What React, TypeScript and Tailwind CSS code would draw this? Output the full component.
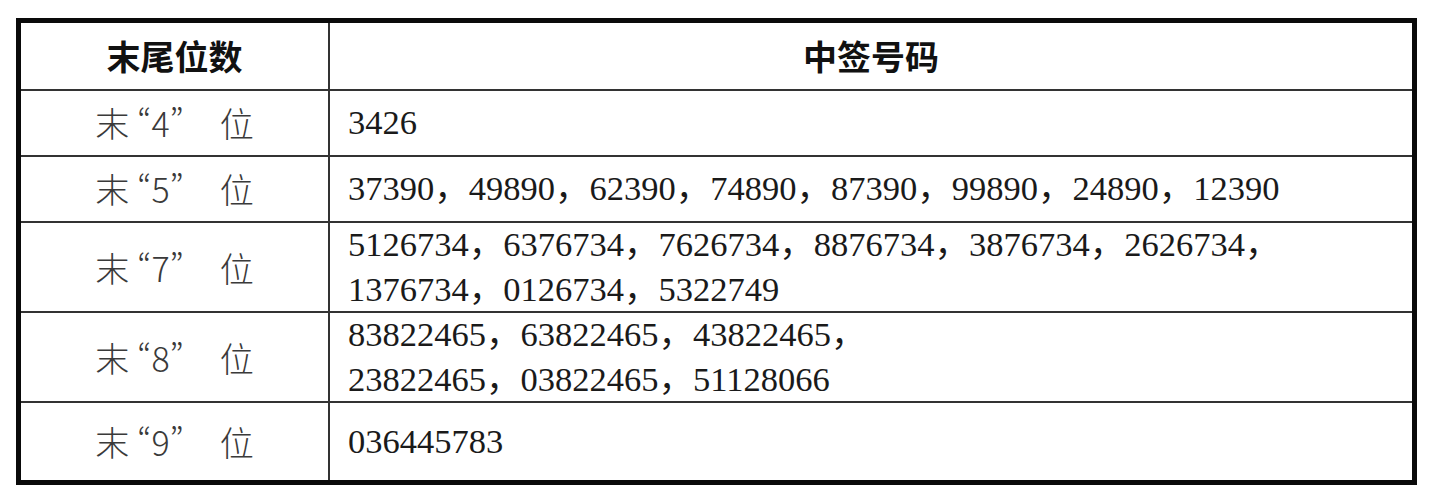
import React from "react";

interface Row {
  label: string;
  lines: string[];
  height: string;
}

const rows: Row[] = [
  { label: "4", lines: ["3426"], height: "h-[66px]" },
  {
    label: "5",
    lines: ["37390，49890，62390，74890，87390，99890，24890，12390"],
    height: "h-[67px]",
  },
  {
    label: "7",
    lines: [
      "5126734，6376734，7626734，8876734，3876734，2626734，",
      "1376734，0126734，5322749",
    ],
    height: "h-[90px]",
  },
  {
    label: "8",
    lines: ["83822465，63822465，43822465，", "23822465，03822465，51128066"],
    height: "h-[90px]",
  },
  { label: "9", lines: ["036445783"], height: "h-[77px]" },
];

const serif = "font-['Liberation_Serif','Noto_Sans_CJK_SC',serif]";
const cjk = "font-['Noto_Sans_CJK_SC',sans-serif]";

const App: React.FC = () => {
  return (
    <div className="w-[1440px] h-[496px] bg-white pt-[18px] pl-[16px]">
      <div className="w-[1401px] h-[467px] border-[5px] border-[#0a0a0a] flex flex-col">
        <div className="flex h-[68px] border-b-2 border-[#333]">
          <div
            className={`w-[309px] shrink-0 border-r-2 border-[#333] flex items-center justify-center text-[34px] font-bold text-[#111] ${cjk}`}
          >
            末尾位数
          </div>
          <div
            className={`flex-1 flex items-center justify-center text-[34px] font-bold text-[#111] ${cjk}`}
          >
            中签号码
          </div>
        </div>
        {rows.map((row, i) => (
          <div
            key={row.label}
            className={`flex ${row.height} ${
              i < rows.length - 1 ? "border-b-2 border-[#333]" : ""
            }`}
          >
            <div
              className={`w-[309px] shrink-0 border-r-2 border-[#333] flex items-center justify-center text-[34px] font-light text-[#3a3a3a] ${cjk}`}
            >
              <span>末</span>
              <span className="ml-[8px] [font-feature-settings:'pwid']">
                “{row.label}”
              </span>
              <span className="ml-[36px]">位</span>
            </div>
            <div
              className={`flex-1 flex flex-col justify-center pl-[18px] text-[34.5px] leading-[45px] text-[#1a1a1a] ${serif}`}
            >
              {row.lines.map((line) => (
                <div key={line} className="whitespace-nowrap">
                  {line}
                </div>
              ))}
            </div>
          </div>
        ))}
      </div>
    </div>
  );
};

export default App;
